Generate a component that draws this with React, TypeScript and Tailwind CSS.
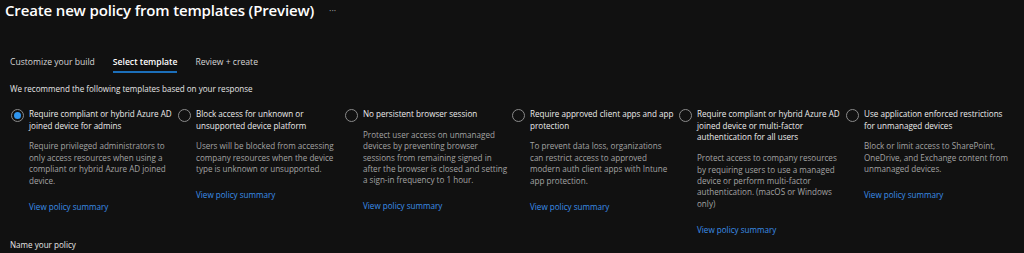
import React from "react";

type Template = {
  title: string;
  description: string;
  selected?: boolean;
};

const templates: Template[] = [
  {
    title: "Require compliant or hybrid Azure AD joined device for admins",
    description:
      "Require privileged administrators to only access resources when using a compliant or hybrid Azure AD joined device.",
    selected: true,
  },
  {
    title: "Block access for unknown or unsupported device platform",
    description:
      "Users will be blocked from accessing company resources when the device type is unknown or unsupported.",
  },
  {
    title: "No persistent browser session",
    description:
      "Protect user access on unmanaged devices by preventing browser sessions from remaining signed in after the browser is closed and setting a sign-in frequency to 1 hour.",
  },
  {
    title: "Require approved client apps and app protection",
    description:
      "To prevent data loss, organizations can restrict access to approved modern auth client apps with Intune app protection.",
  },
  {
    title: "Require compliant or hybrid Azure AD joined device or multi-factor authentication for all users",
    description:
      "Protect access to company resources by requiring users to use a managed device or perform multi-factor authentication. (macOS or Windows only)",
  },
  {
    title: "Use application enforced restrictions for unmanaged devices",
    description:
      "Block or limit access to SharePoint, OneDrive, and Exchange content from unmanaged devices.",
  },
];

function Radio({ checked }: { checked?: boolean }) {
  return (
    <span className="mt-[1px] flex h-[13px] w-[13px] shrink-0 items-center justify-center rounded-full border border-[#8a8a8a]">
      {checked && <span className="h-[7px] w-[7px] rounded-full bg-[#2f96f0]" />}
    </span>
  );
}

export default function App() {
  return (
    <div
      className="h-[253px] w-[1024px] overflow-hidden bg-[#111111] text-white"
      style={{ fontFamily: '"Open Sans", "Noto Sans", sans-serif' }}
    >
      {/* Header */}
      <div className="flex h-[21px] items-center px-[5px]">
        <h1 className="text-[15px] font-semibold leading-[21px] tracking-[-0.15px] text-white">
          Create new policy from templates (Preview)
        </h1>
        <span className="ml-[15px] text-[9px] leading-none text-[#a8a8a8]">···</span>
      </div>

      {/* Tabs */}
      <div className="mt-[33px] flex items-start gap-[18px] px-[10px] text-[8.6px] leading-[16px]">
        <div className="text-[#d6d6d6]">Customize your build</div>
        <div className="flex flex-col font-semibold text-white">
          <span>Select template</span>
          <span className="mt-[1px] h-[2px] w-full bg-[#1c6fba]" />
        </div>
        <div className="text-[#d6d6d6]">Review + create</div>
      </div>

      {/* Intro */}
      <p className="mt-[9px] px-[10px] text-[8.05px] leading-[14px] text-[#e6e6e6]">
        We recommend the following templates based on your response
      </p>

      {/* Templates */}
      <div className="mt-[12px] grid grid-cols-6 px-[11px]">
        {templates.map((t) => (
          <div key={t.title} className="flex gap-[5px] pr-[4px]">
            <Radio checked={t.selected} />
            <div className="flex flex-col">
              <div className="text-[8.1px] leading-[11.7px] text-[#ececec]">{t.title}</div>
              <div className="mt-[9px] text-[8.1px] leading-[11.4px] text-[#a3a3a3]">{t.description}</div>
              <a className="mt-[14.5px] text-[8.1px] leading-[11.4px] text-[#3b8ee8]" href="#">
                View policy summary
              </a>
            </div>
          </div>
        ))}
      </div>

      {/* Name */}
      <div className="mt-[4px] px-[10px] text-[8.1px] leading-[12px] text-[#e6e6e6]">Name your policy</div>
    </div>
  );
}
